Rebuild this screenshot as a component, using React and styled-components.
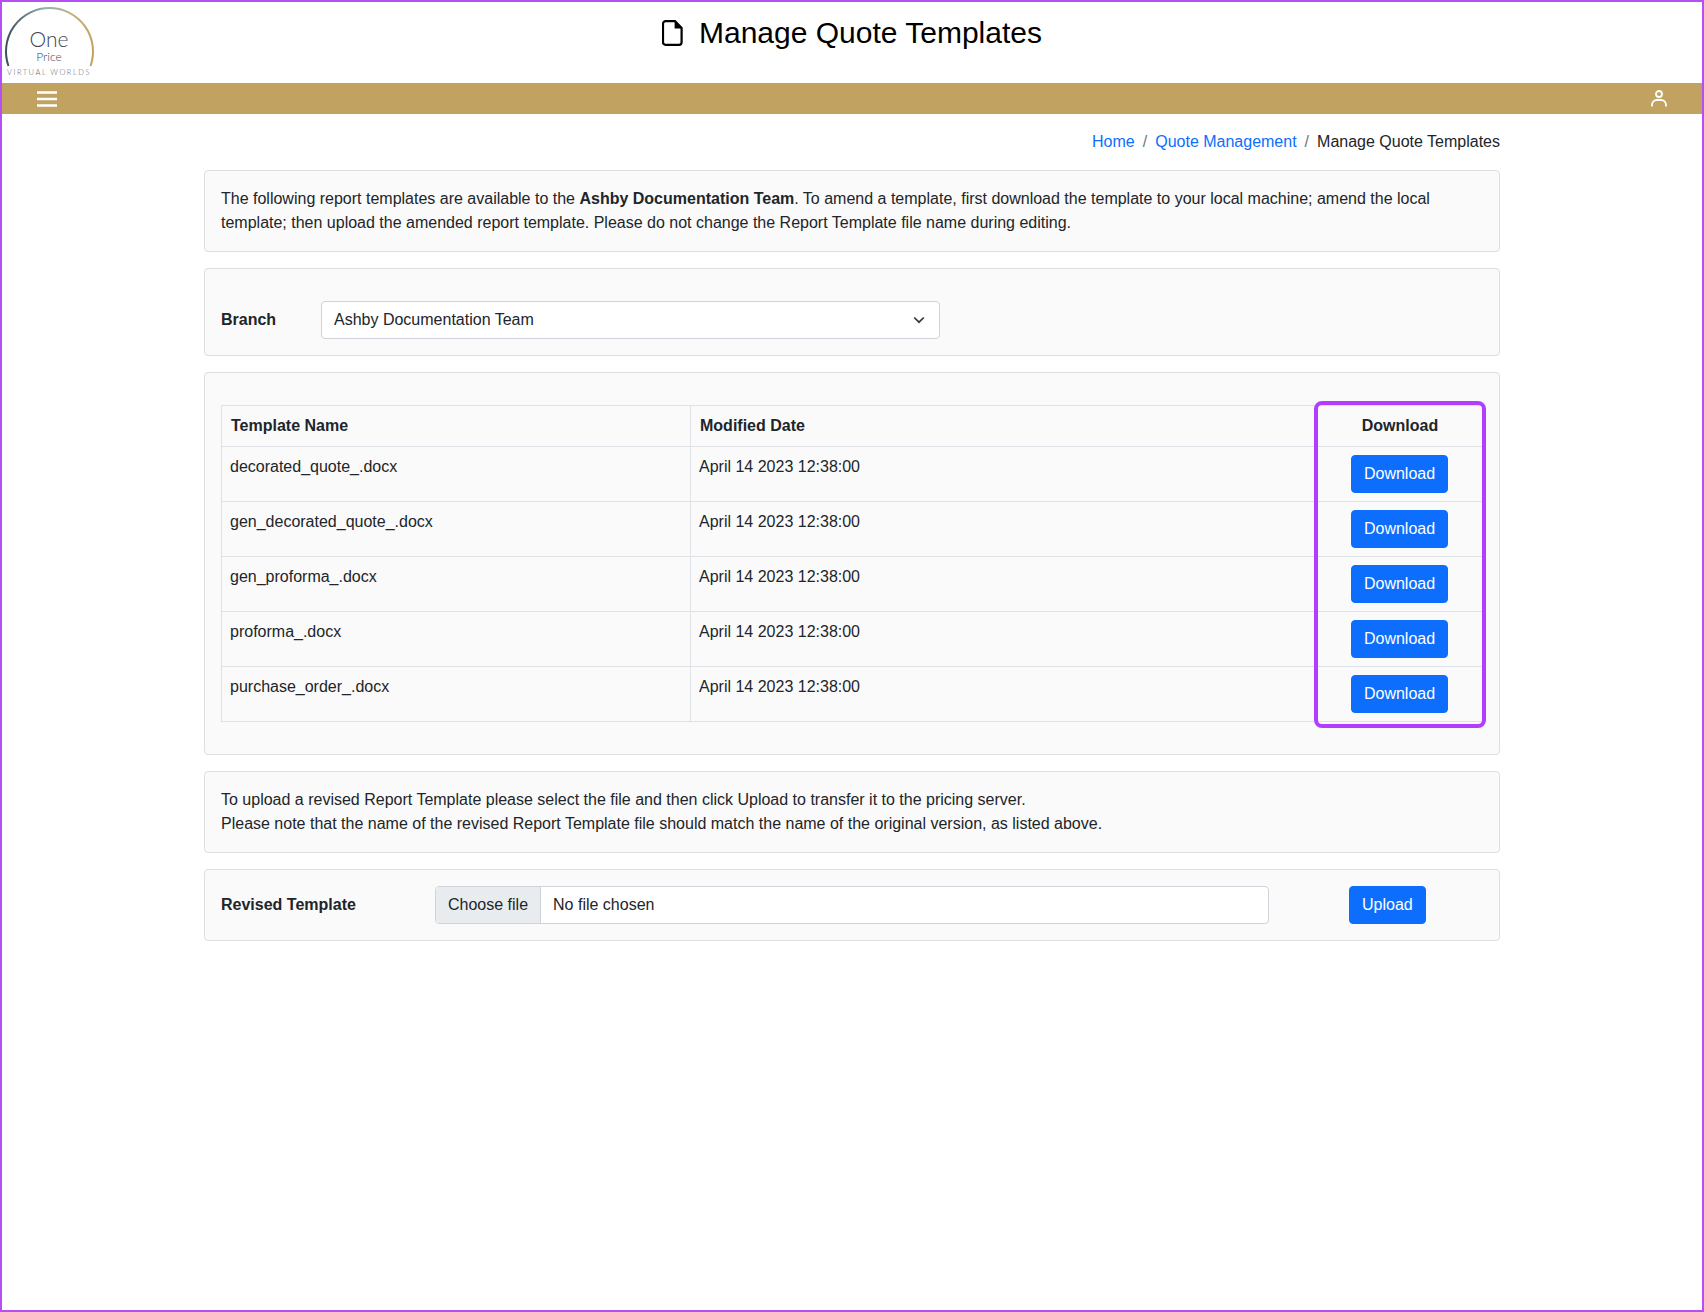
import * as React from 'react';
import styled, { createGlobalStyle } from 'styled-components';

const templates = [
  'decorated_quote_.docx',
  'gen_decorated_quote_.docx',
  'gen_proforma_.docx',
  'proforma_.docx',
  'purchase_order_.docx',
];

export default function App() {
  return (
    <Frame>
      <GlobalStyle />
      <TopHeader>
        <Logo>
          <LogoArc width="94" height="68" viewBox="0 0 94 68">
            <defs>
              <linearGradient id="arcGrad" x1="0" y1="0" x2="1" y2="0">
                <stop offset="0" stopColor="#3f4f5c" />
                <stop offset="0.45" stopColor="#8fb0b4" />
                <stop offset="0.75" stopColor="#c4b183" />
                <stop offset="1" stopColor="#c2a25f" />
              </linearGradient>
            </defs>
            <path d="M6.5 64 A43.5 43.5 0 1 1 88.5 64" fill="none" stroke="url(#arcGrad)" strokeWidth="2" />
          </LogoArc>
          <LogoOne>One</LogoOne>
          <LogoPrice>Price</LogoPrice>
          <LogoTag>VIRTUAL WORLDS</LogoTag>
        </Logo>
        <Title>
          <svg width="21" height="26" viewBox="0 0 21 26" aria-hidden="true">
            <path d="M3.5 1.2H13L19.6 8V22.3a2.5 2.5 0 0 1-2.5 2.5H3.5A2.5 2.5 0 0 1 1 22.3V3.7a2.5 2.5 0 0 1 2.5-2.5Z" fill="none" stroke="#000" strokeWidth="2.2" />
            <path d="M12.6 1.5V8.6H19.4Z" fill="#000" />
          </svg>
          <span>Manage Quote Templates</span>
        </Title>
      </TopHeader>
      <NavBar>
        <svg width="20" height="16" viewBox="0 0 20 16" aria-hidden="true">
          <path d="M0 1.5H20M0 8H20M0 14.5H20" stroke="#fff" strokeWidth="2.6" />
        </svg>
        <svg width="16" height="17" viewBox="0 0 16 17" aria-hidden="true">
          <circle cx="8" cy="4" r="3" fill="none" stroke="#fff" strokeWidth="1.8" />
          <path d="M1 16.5V15a5 5 0 0 1 5-5h4a5 5 0 0 1 5 5v1.5" fill="none" stroke="#fff" strokeWidth="1.8" />
        </svg>
      </NavBar>
      <Main>
        <Breadcrumb>
          <Crumb href="#">Home</Crumb>
          <CrumbSep>/</CrumbSep>
          <Crumb href="#">Quote Management</Crumb>
          <CrumbSep>/</CrumbSep>
          <span>Manage Quote Templates</span>
        </Breadcrumb>
        <Stack>
          <Card>
            The following report templates are available to the <strong>Ashby Documentation Team</strong>. To amend a template, first download the template to your local machine; amend the local template; then upload the amended report template. Please do not change the Report Template file name during editing.
          </Card>
          <BranchCard>
            <BranchLabel>Branch</BranchLabel>
            <SelectBox>
              <span>Ashby Documentation Team</span>
              <svg width="12" height="8" viewBox="0 0 12 8" aria-hidden="true">
                <path d="M1.2 1.5 6 6.2l4.8-4.7" fill="none" stroke="#343a40" strokeWidth="1.7" />
              </svg>
            </SelectBox>
          </BranchCard>
          <TableCard>
            <TableWrap>
              <Table>
                <thead>
                  <tr>
                    <Th $w="469px">Template Name</Th>
                    <Th $w="626px">Modified Date</Th>
                    <Th $center>Download</Th>
                  </tr>
                </thead>
                <tbody>
                  {templates.map((name) => (
                    <tr key={name}>
                      <Td>{name}</Td>
                      <Td>April 14 2023 12:38:00</Td>
                      <Td $center>
                        <Button>Download</Button>
                      </Td>
                    </tr>
                  ))}
                </tbody>
              </Table>
              <Highlight />
            </TableWrap>
          </TableCard>
          <Card>
            To upload a revised Report Template please select the file and then click Upload to transfer it to the pricing server.
            <br />
            Please note that the name of the revised Report Template file should match the name of the original version, as listed above.
          </Card>
          <UploadCard>
            <UploadLabel>Revised Template</UploadLabel>
            <FileInput>
              <FileButton>Choose file</FileButton>
              <FileName>No file chosen</FileName>
            </FileInput>
            <UploadButton>Upload</UploadButton>
          </UploadCard>
        </Stack>
      </Main>
    </Frame>
  );
}

const GlobalStyle = createGlobalStyle`
  * { box-sizing: border-box; }
  body {
    margin: 0;
    background: #fff;
    color: #212529;
    font-family: "Liberation Sans", Arial, sans-serif;
    font-size: 16px;
    line-height: 24px;
  }
`;

const Frame = styled.div`
  height: 1312px;
  border: 2px solid #b44ef5;
  background: #fff;
`;

const TopHeader = styled.header`
  position: relative;
  height: 81px;
  display: flex;
  justify-content: center;
`;

const Logo = styled.div`
  position: absolute;
  left: 0;
  top: 0;
  width: 94px;
  height: 78px;
  text-align: center;
  color: #3c4650;
  font-family: Lato, sans-serif;
`;

const LogoArc = styled.svg`
  position: absolute;
  left: 0;
  top: 0;
`;

const LogoOne = styled.div`
  position: absolute;
  left: 0;
  right: 0;
  top: 25px;
  font-size: 21px;
  line-height: 24px;
  font-weight: 300;
`;

const LogoPrice = styled.div`
  position: absolute;
  left: 0;
  right: 0;
  top: 48px;
  font-size: 12px;
  line-height: 14px;
  font-weight: 300;
`;

const LogoTag = styled.div`
  position: absolute;
  left: 0;
  right: 0;
  top: 67px;
  font-size: 7.5px;
  line-height: 8px;
  letter-spacing: 1.5px;
  font-weight: 300;
  white-space: nowrap;
  color: #5f6972;
`;

const Title = styled.h1`
  margin: 12px 0 0;
  height: 38px;
  display: flex;
  align-items: center;
  gap: 16px;
  font-size: 30px;
  line-height: 38px;
  font-weight: 400;
  color: #000;
`;

const NavBar = styled.nav`
  height: 31px;
  background: #c1a261;
  display: flex;
  align-items: center;
  justify-content: space-between;
  padding: 0 35px;
`;

const Main = styled.main`
  width: 1296px;
  margin: 0 auto;
`;

const Breadcrumb = styled.div`
  display: flex;
  justify-content: flex-end;
  padding-top: 16px;
  margin-bottom: 16px;
`;

const Crumb = styled.a`
  color: #0d6efd;
  text-decoration: none;
`;

const CrumbSep = styled.span`
  color: #6c757d;
  padding: 0 8px;
`;

const Stack = styled.div`
  display: flex;
  flex-direction: column;
  gap: 16px;
`;

const Card = styled.section`
  padding: 16px;
  background: #fafafa;
  border: 1px solid #dedede;
  border-radius: 4px;
`;

const BranchCard = styled(Card)`
  display: flex;
  align-items: center;
  padding-top: 32px;
`;

const BranchLabel = styled.strong`
  width: 100px;
`;

const SelectBox = styled.div`
  width: 619px;
  height: 38px;
  padding: 0 14px 0 12px;
  display: flex;
  align-items: center;
  justify-content: space-between;
  background: #fff;
  border: 1px solid #ced4da;
  border-radius: 4px;
`;

const TableCard = styled(Card)`
  padding: 32px 16px;
`;

const TableWrap = styled.div`
  position: relative;
`;

const Table = styled.table`
  width: 100%;
  border-collapse: collapse;
  table-layout: fixed;
`;

const Th = styled.th`
  width: ${(p) => p.$w || 'auto'};
  padding: 8px 8px 8px 9px;
  text-align: ${(p) => (p.$center ? 'center' : 'left')};
  font-weight: 700;
  border: 1px solid #dee2e6;
`;

const Td = styled.td`
  padding: 8px;
  height: 55px;
  vertical-align: top;
  text-align: ${(p) => (p.$center ? 'center' : 'left')};
  border: 1px solid #dee2e6;
`;

const Button = styled.button`
  height: 38px;
  padding: 0 12px;
  display: inline-block;
  vertical-align: top;
  background: #0d6efd;
  color: #fff;
  border: 1px solid #0d6efd;
  border-radius: 4px;
  font: inherit;
`;

const Highlight = styled.div`
  position: absolute;
  left: 1093px;
  right: -3px;
  top: -4px;
  bottom: -6px;
  border: 4px solid #b33dff;
  border-radius: 8px;
  pointer-events: none;
`;

const UploadCard = styled(Card)`
  display: flex;
  align-items: center;
`;

const UploadLabel = styled.strong`
  width: 214px;
`;

const FileInput = styled.div`
  width: 834px;
  height: 38px;
  display: flex;
  background: #fff;
  border: 1px solid #ced4da;
  border-radius: 4px;
  overflow: hidden;
`;

const FileButton = styled.div`
  padding: 6px 12px;
  background: #e9ecef;
  border-right: 1px solid #ced4da;
`;

const FileName = styled.div`
  padding: 6px 12px;
`;

const UploadButton = styled(Button)`
  margin-left: 80px;
`;
